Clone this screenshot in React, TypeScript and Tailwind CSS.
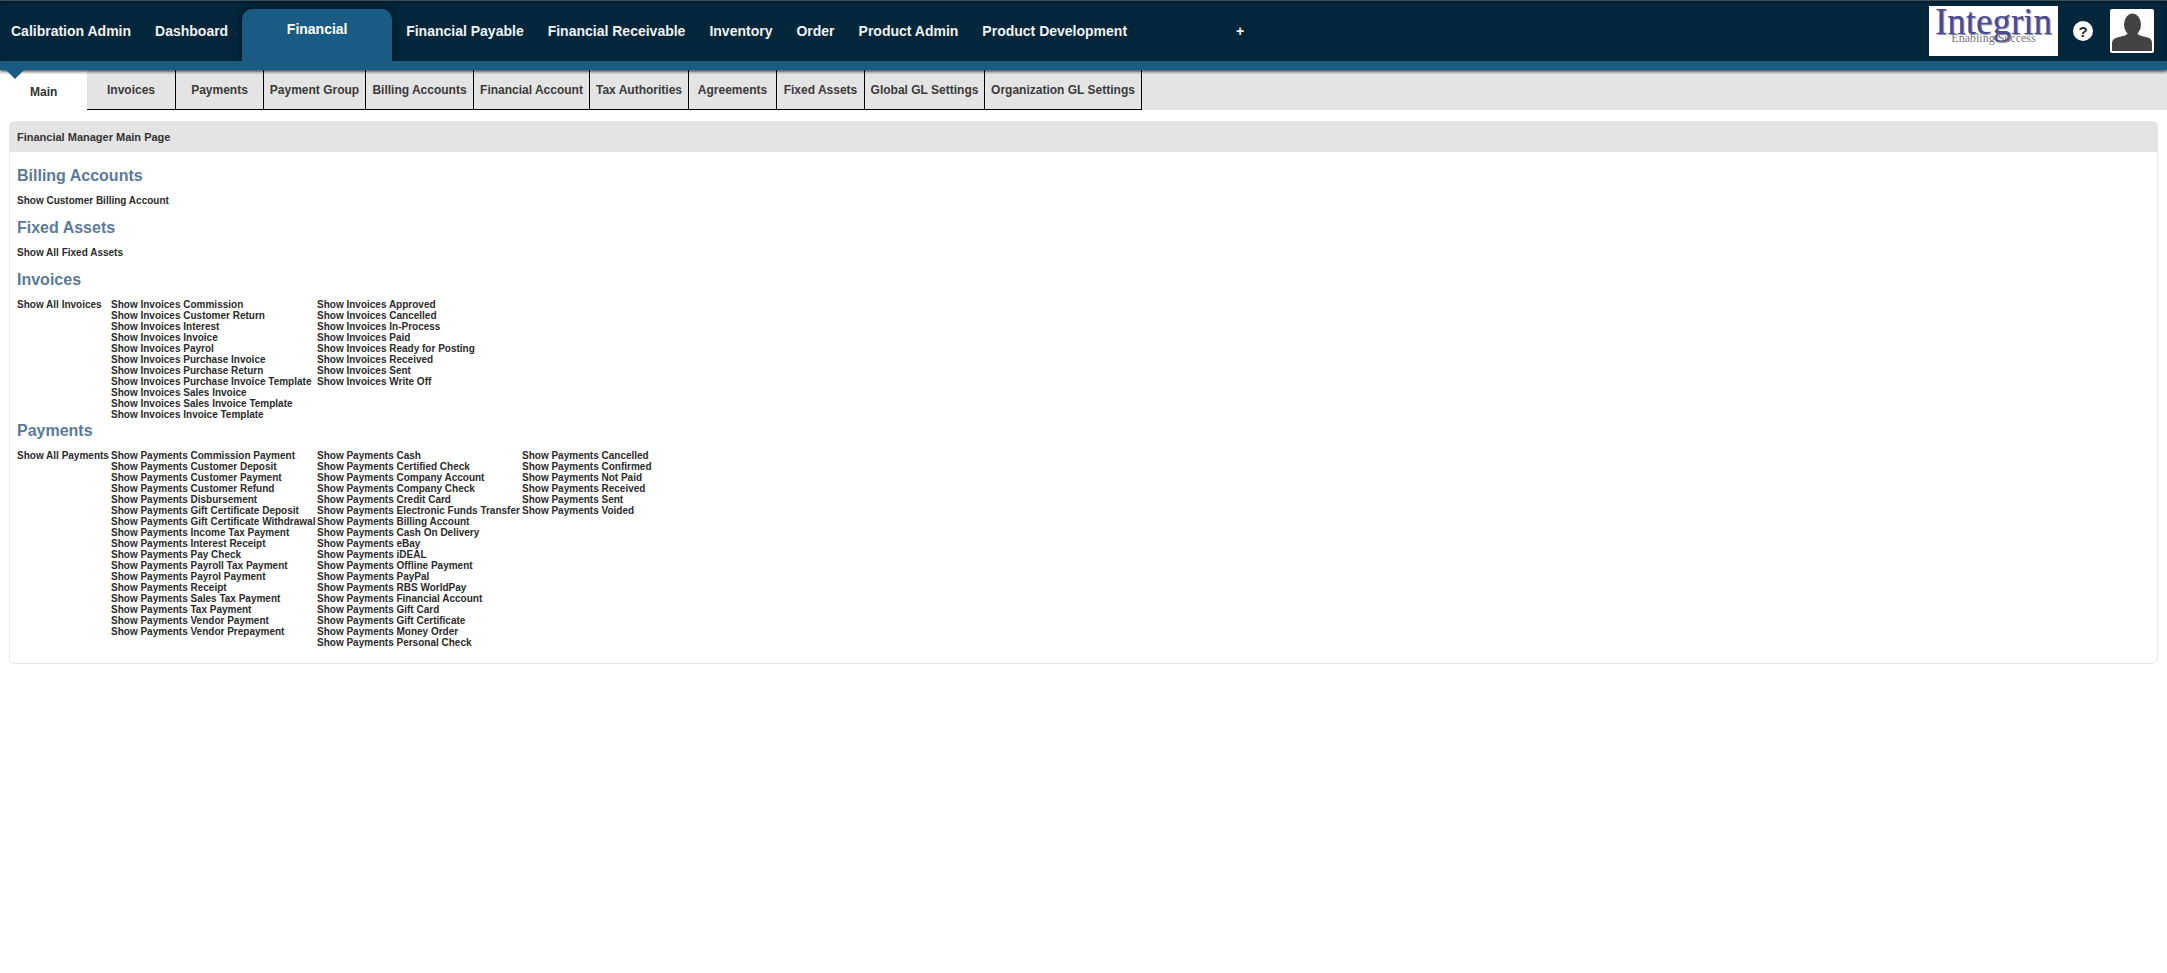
const navLeft = ['Calibration Admin', 'Dashboard'];
const navRight = ['Financial Payable', 'Financial Receivable', 'Inventory', 'Order', 'Product Admin', 'Product Development'];

const tabs = [
  { label: 'Invoices', w: 'w-[89px]' },
  { label: 'Payments', w: 'w-[88px]' },
  { label: 'Payment Group', w: 'w-[102px]' },
  { label: 'Billing Accounts', w: 'w-[108px]' },
  { label: 'Financial Account', w: 'w-[116px]' },
  { label: 'Tax Authorities', w: 'w-[99px]' },
  { label: 'Agreements', w: 'w-[88px]' },
  { label: 'Fixed Assets', w: 'w-[88px]' },
  { label: 'Global GL Settings', w: 'w-[120px]' },
  { label: 'Organization GL Settings', w: 'w-[157px]' },
];

const invoiceCols = [
  ['Commission', 'Customer Return', 'Interest', 'Invoice', 'Payrol', 'Purchase Invoice', 'Purchase Return', 'Purchase Invoice Template', 'Sales Invoice', 'Sales Invoice Template', 'Invoice Template'],
  ['Approved', 'Cancelled', 'In-Process', 'Paid', 'Ready for Posting', 'Received', 'Sent', 'Write Off'],
];

const paymentCols = [
  ['Commission Payment', 'Customer Deposit', 'Customer Payment', 'Customer Refund', 'Disbursement', 'Gift Certificate Deposit', 'Gift Certificate Withdrawal', 'Income Tax Payment', 'Interest Receipt', 'Pay Check', 'Payroll Tax Payment', 'Payrol Payment', 'Receipt', 'Sales Tax Payment', 'Tax Payment', 'Vendor Payment', 'Vendor Prepayment'],
  ['Cash', 'Certified Check', 'Company Account', 'Company Check', 'Credit Card', 'Electronic Funds Transfer', 'Billing Account', 'Cash On Delivery', 'eBay', 'iDEAL', 'Offline Payment', 'PayPal', 'RBS WorldPay', 'Financial Account', 'Gift Card', 'Gift Certificate', 'Money Order', 'Personal Check'],
  ['Cancelled', 'Confirmed', 'Not Paid', 'Received', 'Sent', 'Voided'],
];

const Heading = ({ children }: { children: string }) => (
  <h3 className="h-[20px] mb-[9px] text-[16px] leading-[20px] font-bold text-[#5b7a99]">{children}</h3>
);

const LinkColumn = ({ prefix, items, width }: { prefix: string; items: string[]; width: string }) => (
  <ul className={`${width} shrink-0`}>
    {items.map((item) => (
      <li key={item} className="whitespace-nowrap">{prefix} {item}</li>
    ))}
  </ul>
);

export default function App() {
  return (
    <div className="min-h-[973px] bg-white font-['Liberation_Sans',Arial,sans-serif]">
      <header className="relative h-[61px] flex items-end bg-[#03263a] border-t border-[#3c4f5c] shadow-[inset_0_2px_2px_rgba(0,0,0,0.3)]">
        <nav className="flex items-end h-full pl-[11px] text-[14px] font-bold text-[#f0f3f5]">
          {navLeft.map((item) => (
            <a key={item} className="mr-[24px] h-full pt-[21px] leading-[18px] whitespace-nowrap">{item}</a>
          ))}
          <a className="-ml-[10px] mr-[14px] w-[150px] h-[52px] pt-[11px] text-center leading-[18px] rounded-t-[10px] bg-[#1a5b83] shadow-[0_0_6px_rgba(0,0,0,0.5)] text-white">
            Financial
          </a>
          {navRight.map((item) => (
            <a key={item} className="mr-[24px] h-full pt-[21px] leading-[18px] whitespace-nowrap">{item}</a>
          ))}
          <a className="ml-[85px] h-full pt-[21px] leading-[18px]">+</a>
        </nav>
        <div className="ml-auto h-full flex items-center pr-[13px]">
          <div className="w-[129px] h-[50px] bg-white flex flex-col items-center pt-[1px] font-['Liberation_Serif',serif]">
            <span className="text-[37px] leading-[30px] text-[#4b4b93] [text-shadow:1px_1px_1px_#8a8a9a]">Integrin</span>
            <span className="-mt-[6px] text-[12px] leading-[14px] text-[#77777f]">Enabling Success</span>
          </div>
          <div className="ml-[15px] w-[20px] h-[20px] rounded-full bg-white flex items-center justify-center text-[15px] leading-none font-bold text-[#1d2a33]">?</div>
          <div className="ml-[17px] w-[44px] h-[44px] bg-white rounded-[2px] overflow-hidden">
            <svg viewBox="0 0 44 44" className="w-full h-full">
              <ellipse cx="22.5" cy="15.5" rx="8.5" ry="11" fill="#434343" />
              <path d="M2 42v-7c0-4 2-6 7-7 5-1 8-2 9-4h9c1 2 4 3 9 4 5 1 6 3 6 7v7z" fill="#434343" />
            </svg>
          </div>
        </div>
      </header>
      <div className="relative h-[9px] bg-[#1a5b83] shadow-[0_2px_3px_rgba(0,0,0,0.6)] z-10">
        <div className="absolute left-[6px] top-[9px] w-0 h-0 border-l-[9px] border-r-[9px] border-t-[9px] border-l-transparent border-r-transparent border-t-[#1a5b83]" />
      </div>
      <div className="flex h-[40px] bg-[#e4e4e4] text-[12px] font-bold text-[#3a3a3a]">
        <a className="w-[87px] bg-white pl-[30px] pt-[15px] leading-[14px] text-[#333333]">Main</a>
        {tabs.map((tab) => (
          <a key={tab.label} className={`${tab.w} flex justify-center pt-[13px] leading-[14px] whitespace-nowrap border-r border-b border-black first:border-l`}>
            {tab.label}
          </a>
        ))}
      </div>
      <main className="mx-[9px] mt-[11px] border border-[#e8e8e8] rounded-[6px] text-[10px] leading-[11px] font-bold text-[#2b2b2b]">
        <div className="h-[31px] -mt-px -mx-px bg-[#e4e4e4] rounded-t-[6px] pl-[8px] text-[11px] leading-[32px] text-[#333333]">
          Financial Manager Main Page
        </div>
        <div className="pl-[7px] pt-[14px] pb-[15px]">
          <Heading>Billing Accounts</Heading>
          <div className="mb-[12px]">Show Customer Billing Account</div>
          <Heading>Fixed Assets</Heading>
          <div className="mb-[12px]">Show All Fixed Assets</div>
          <Heading>Invoices</Heading>
          <div className="flex mb-[1px]">
            <div className="w-[94px] shrink-0">Show All Invoices</div>
            <LinkColumn prefix="Show Invoices" items={invoiceCols[0]} width="w-[206px]" />
            <LinkColumn prefix="Show Invoices" items={invoiceCols[1]} width="w-[205px]" />
          </div>
          <Heading>Payments</Heading>
          <div className="flex">
            <div className="w-[94px] shrink-0">Show All Payments</div>
            <LinkColumn prefix="Show Payments" items={paymentCols[0]} width="w-[206px]" />
            <LinkColumn prefix="Show Payments" items={paymentCols[1]} width="w-[205px]" />
            <LinkColumn prefix="Show Payments" items={paymentCols[2]} width="w-[205px]" />
          </div>
        </div>
      </main>
    </div>
  );
}
